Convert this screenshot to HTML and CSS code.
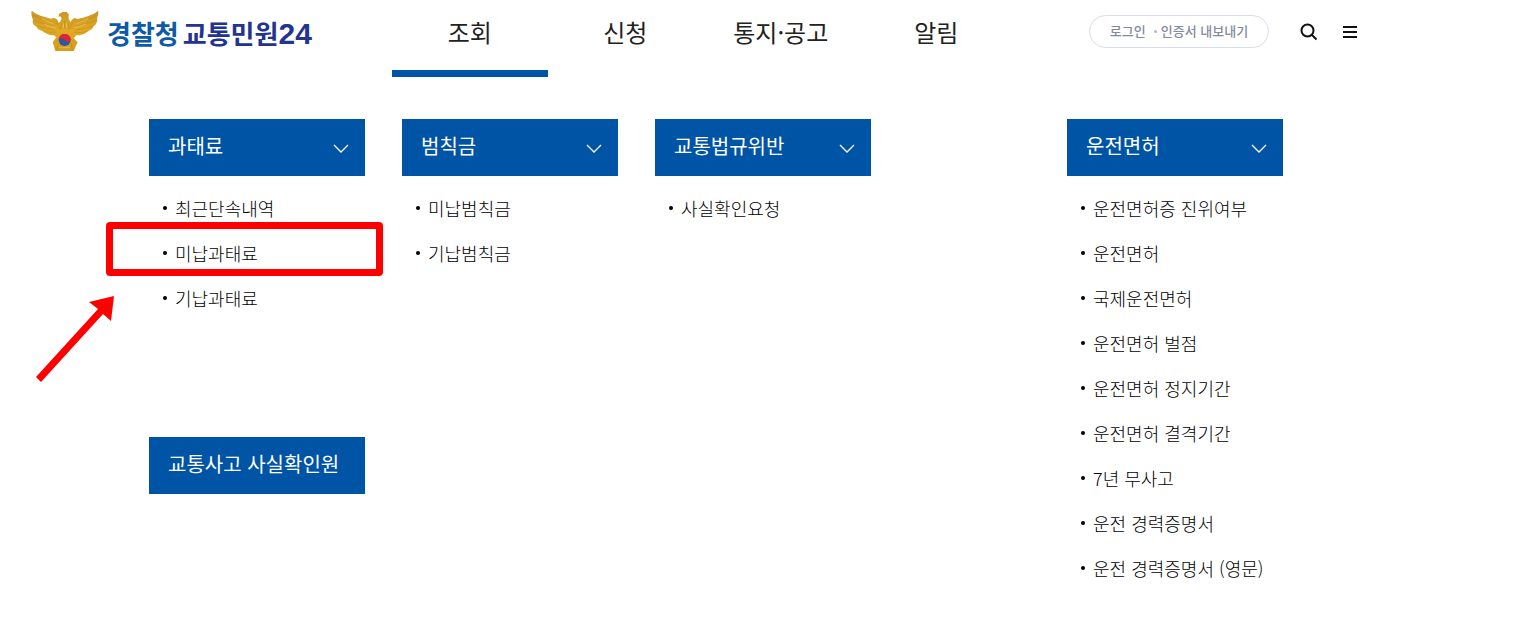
FILE: index.html
```html
<!DOCTYPE html>
<html lang="ko">
<head>
<meta charset="utf-8">
<meta name="viewport" content="width=device-width, initial-scale=1">
<title>경찰청 교통민원24</title>
<link rel="stylesheet" href="styles.css">
</head>
<body>
<header class="header">
  <a class="brand" href="#">
    <svg class="emblem" viewBox="0 0 204 126" aria-hidden="true">
      <defs>
        <linearGradient id="gold" x1="0" y1="0" x2="0" y2="1">
          <stop offset="0" stop-color="#c99522"/>
          <stop offset=".5" stop-color="#e0aa24"/>
          <stop offset="1" stop-color="#d69c1c"/>
        </linearGradient>
      </defs>
      <path fill="url(#gold)" d="M2 2C18 16 39 20 59 26L69 24L78 28L83 38L88 35L92 24L88 19L83 20L84 12L95 6H107L113 12V26L118 37L122 30L130 24L141 27C160 21 183 17 202 2C203 17 196 26 199 29C198 42 190 47 187 50C184 59 175 61 169 65C160 73 149 76 136 76L128 84L140 97L128 123H73L65 97L76 82L69 76C51 76 42 68 34 63C26 60 18 57 17 50C8 46 3 38 6 29C2 22 0 12 2 2Z"/>
      <path fill="none" stroke="#b98420" stroke-width="1.5" d="M7 16C26 28 43 30 62 36M8 29C27 39 42 43 66 47M18 47C35 53 48 58 70 60M34 61C48 67 60 68 74 66M197 16C178 28 161 30 142 36M198 29C177 39 162 43 138 47M187 48C169 53 156 58 134 60M170 63C156 68 144 69 130 66M76 32L88 57M128 32L116 57M92 37L90 58M113 38L114 58M101 33V56M72 97L84 87M133 97L119 87M77 121L83 98M124 121L120 98"/>
      <path fill="none" stroke="#f0cb66" stroke-width="2" d="M32 26L66 41M40 43L73 54M172 26L137 41M164 43L131 54M97 40V54M107 40V54M83 113H117"/>
      <circle cx="101" cy="90" r="18" fill="#2b57a5"/>
      <path fill="#e5222f" d="M83 88C84 78 92 72 101 72C112 72 120 81 119 91C112 99 105 94 101 89C96 84 90 83 83 88Z"/>
    </svg>
    <span class="brand-text"><span class="brand-agency">경찰청</span><span>교통민원<span class="brand-number">24</span></span></span>
  </a>
  <nav class="main-nav">
    <a class="nav-link active" href="#">조회</a>
    <a class="nav-link" href="#">신청</a>
    <a class="nav-link" href="#">통지·공고</a>
    <a class="nav-link" href="#">알림</a>
  </nav>
  <div class="tools">
    <div class="account">
      <a href="#">로그인</a>
      <span class="separator"></span>
      <a href="#">인증서 내보내기</a>
    </div>
    <button class="icon-button search" type="button" aria-label="검색">
      <svg width="18" height="18" viewBox="0 0 18 18" fill="none" stroke="#111" stroke-width="2"><circle cx="7.5" cy="7.5" r="6"/><path d="M12 12L16.5 16.5"/></svg>
    </button>
    <button class="icon-button" type="button" aria-label="전체 메뉴">
      <svg width="16" height="14" viewBox="0 0 16 14" fill="none" stroke="#111" stroke-width="2"><path d="M1 2H15M1 7H15M1 12H15"/></svg>
    </button>
  </div>
</header>

<main class="menu">
  <div class="menu-main">
    <section>
      <button class="menu-title" type="button">과태료
        <svg class="chevron" viewBox="0 0 16 10"><path d="M1 1L8 8L15 1"/></svg>
      </button>
      <ul class="menu-list">
        <li><a href="#">최근단속내역</a></li>
        <li class="marked"><a href="#">미납과태료</a>
          <span class="mark-box"></span>
          <svg class="mark-arrow" viewBox="0 0 80 88" aria-hidden="true"><path fill="#f00" d="M78 1L75 26L67 19L5 87L0 82L62 14L53 7Z"/></svg>
        </li>
        <li><a href="#">기납과태료</a></li>
      </ul>
    </section>
    <section>
      <button class="menu-title" type="button">범칙금
        <svg class="chevron" viewBox="0 0 16 10"><path d="M1 1L8 8L15 1"/></svg>
      </button>
      <ul class="menu-list">
        <li><a href="#">미납범칙금</a></li>
        <li><a href="#">기납범칙금</a></li>
      </ul>
    </section>
    <section>
      <button class="menu-title" type="button">교통법규위반
        <svg class="chevron" viewBox="0 0 16 10"><path d="M1 1L8 8L15 1"/></svg>
      </button>
      <ul class="menu-list">
        <li><a href="#">사실확인요청</a></li>
      </ul>
    </section>
    <section>
      <a class="menu-title" href="#">교통사고 사실확인원</a>
    </section>
  </div>
  <section class="menu-side">
    <button class="menu-title" type="button">운전면허
      <svg class="chevron" viewBox="0 0 16 10"><path d="M1 1L8 8L15 1"/></svg>
    </button>
    <ul class="menu-list">
      <li><a href="#">운전면허증 진위여부</a></li>
      <li><a href="#">운전면허</a></li>
      <li><a href="#">국제운전면허</a></li>
      <li><a href="#">운전면허 벌점</a></li>
      <li><a href="#">운전면허 정지기간</a></li>
      <li><a href="#">운전면허 결격기간</a></li>
      <li><a href="#">7년 무사고</a></li>
      <li><a href="#">운전 경력증명서</a></li>
      <li><a href="#">운전 경력증명서 (영문)</a></li>
    </ul>
  </section>
</main>
</body>
</html>
```

FILE: styles.css
```css
* {
  box-sizing: border-box;
}

body {
  margin: 0;
  background: #fff;
  color: #222;
  font-family: "Noto Sans CJK KR", sans-serif;
}

a {
  color: inherit;
  text-decoration: none;
}

button {
  border: 0;
  font: inherit;
  cursor: pointer;
}

.header {
  display: grid;
  grid-template-columns: 392px minmax(0, 622px) 1fr;
  align-items: start;
}

.brand {
  display: flex;
  align-items: flex-start;
  gap: 8px;
  padding: 10px 0 0 31px;
}

.emblem {
  width: 68px;
  height: 42px;
}

.brand-text {
  display: flex;
  gap: 4px;
  color: #22348f;
  font-size: 26px;
  font-weight: 700;
  line-height: 46px;
  white-space: nowrap;
}

.brand-agency {
  color: #0e5aa8;
}

.brand-number {
  font-family: "Liberation Sans", sans-serif;
  font-size: 30px;
  line-height: 1;
}

.main-nav {
  display: grid;
  grid-template-columns: repeat(4, 1fr);
}

.nav-link {
  height: 77px;
  border-bottom: 7px solid transparent;
  font-size: 24px;
  line-height: 64px;
  text-align: center;
}

.nav-link.active {
  border-color: #0054a6;
}

.tools {
  display: flex;
  align-items: center;
  padding: 15px 0 0 75px;
}

.account {
  display: flex;
  align-items: center;
  justify-content: center;
  width: 180px;
  height: 33px;
  padding-bottom: 2px;
  border: 1px solid #d9dcea;
  border-radius: 17px;
  color: #858b9c;
  font-size: 13px;
  font-weight: 500;
  white-space: nowrap;
}

.separator {
  width: 3px;
  height: 3px;
  margin: 2px 4px 0 8px;
  border-radius: 50%;
  background: #b4b8c4;
}

.icon-button {
  display: flex;
  padding: 0;
  background: none;
}

.search {
  margin: 0 24px 0 31px;
}

.menu {
  display: flex;
  align-items: flex-start;
  gap: 196px;
  padding: 42px 0 30px 149px;
}

.menu-main {
  display: grid;
  grid-template-columns: repeat(3, 216px);
  gap: 117px 37px;
}

.menu-side {
  width: 216px;
}

.menu-title {
  display: flex;
  align-items: center;
  justify-content: space-between;
  width: 100%;
  height: 57px;
  padding: 0 16px 4px 19px;
  background: #0054a6;
  color: #fff;
  font-size: 20px;
  white-space: nowrap;
}

.chevron {
  width: 16px;
  height: 10px;
  margin-top: 6px;
  fill: none;
  stroke: #fff;
  stroke-width: 1.3;
}

.menu-list {
  margin: 0;
  padding: 9px 0 0 14px;
  list-style: none;
}

.menu-list li {
  position: relative;
  display: flex;
  align-items: center;
  gap: 8px;
  height: 45px;
  color: #000;
  font-size: 18px;
  font-weight: 300;
  white-space: nowrap;
}

.menu-list li::before {
  content: "";
  width: 4px;
  height: 4px;
  border-radius: 50%;
  background: #000;
}

.mark-box {
  position: absolute;
  top: -8px;
  left: -57px;
  width: 277px;
  height: 54px;
  border: 7px solid #f00;
  border-radius: 4px;
}

.mark-arrow {
  position: absolute;
  top: 65px;
  left: -127px;
  width: 80px;
  height: 88px;
}
```
